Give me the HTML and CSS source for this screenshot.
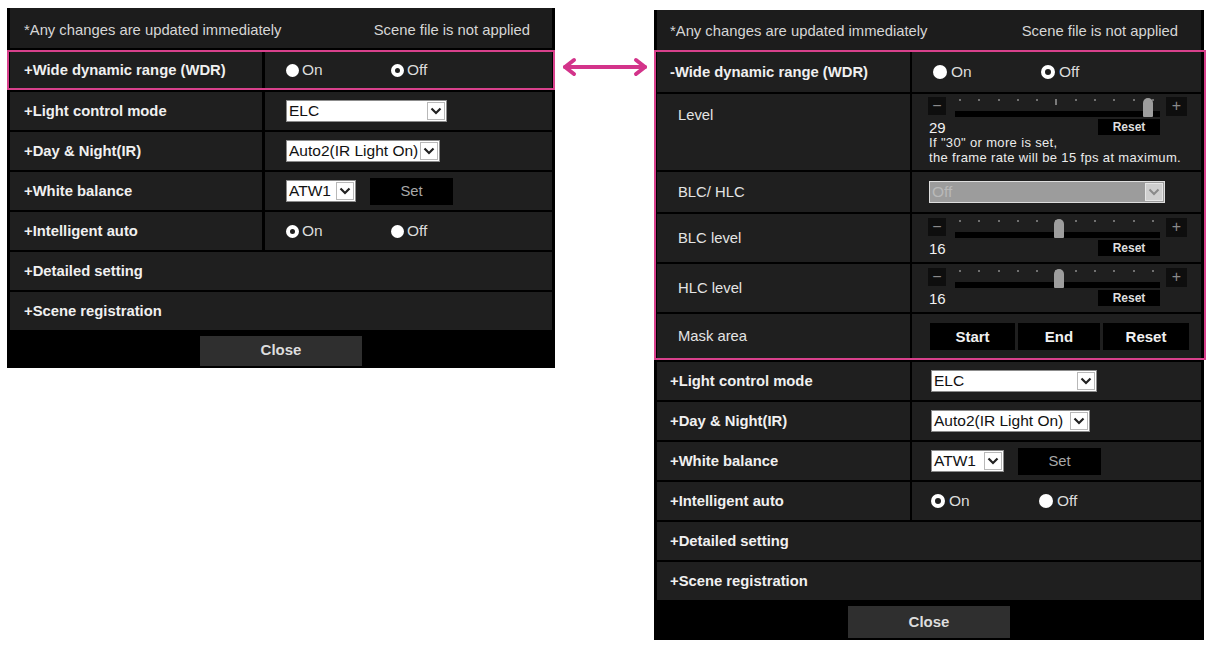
FILE: index.html
```html
<!DOCTYPE html>
<html>
<head>
<meta charset="utf-8">
<title>Image adjust</title>
<link rel="stylesheet" href="styles.css">
</head>
<body>
<div class="stage">

  <section class="panel panel-left">
    <div class="head"><span>*Any changes are updated immediately</span><span>Scene file is not applied</span></div>
    <div class="hl">
      <div class="row h36">
        <div class="lab b">+Wide dynamic range (WDR)</div>
        <div class="val">
          <span class="radio"><i class="dot fill"></i>On</span>
          <span class="radio"><i class="dot ring"></i>Off</span>
        </div>
      </div>
    </div>
    <div class="row">
      <div class="lab b">+Light control mode</div>
      <div class="val"><div class="sel w161"><span class="txt">ELC</span><i class="arr"><svg width="12" height="8" viewBox="0 0 12 8"><polyline points="1.5,1.5 6,6 10.5,1.5" fill="none" stroke="#222" stroke-width="2.2"/></svg></i></div></div>
    </div>
    <div class="row">
      <div class="lab b">+Day &amp; Night(IR)</div>
      <div class="val"><div class="sel w154"><span class="txt">Auto2(IR Light On)</span><i class="arr"><svg width="12" height="8" viewBox="0 0 12 8"><polyline points="1.5,1.5 6,6 10.5,1.5" fill="none" stroke="#222" stroke-width="2.2"/></svg></i></div></div>
    </div>
    <div class="row">
      <div class="lab b">+White balance</div>
      <div class="val"><div class="sel w70"><span class="txt">ATW1</span><i class="arr"><svg width="12" height="8" viewBox="0 0 12 8"><polyline points="1.5,1.5 6,6 10.5,1.5" fill="none" stroke="#222" stroke-width="2.2"/></svg></i></div><span class="setbtn">Set</span></div>
    </div>
    <div class="row">
      <div class="lab b">+Intelligent auto</div>
      <div class="val">
        <span class="radio"><i class="dot ring"></i>On</span>
        <span class="radio"><i class="dot fill"></i>Off</span>
      </div>
    </div>
    <div class="row full"><div class="lab b">+Detailed setting</div></div>
    <div class="row full"><div class="lab b">+Scene registration</div></div>
    <div class="closebar"><span class="closebtn">Close</span></div>
  </section>

  <div class="arrow">
    <svg width="90" height="20" viewBox="0 0 90 20">
      <line x1="5" y1="10" x2="85" y2="10" stroke="#d3338a" stroke-width="4" stroke-linecap="round"/>
      <polyline points="14,3 5,10 14,17" fill="none" stroke="#d3338a" stroke-width="4" stroke-linecap="round" stroke-linejoin="round"/>
      <polyline points="76,3 85,10 76,17" fill="none" stroke="#d3338a" stroke-width="4" stroke-linecap="round" stroke-linejoin="round"/>
    </svg>
  </div>

  <section class="panel panel-right">
    <div class="head"><span>*Any changes are updated immediately</span><span>Scene file is not applied</span></div>
    <div class="hl hl-right">
      <div class="row">
        <div class="lab b">-Wide dynamic range (WDR)</div>
        <div class="val">
          <span class="radio"><i class="dot fill"></i>On</span>
          <span class="radio"><i class="dot ring"></i>Off</span>
        </div>
      </div>
      <div class="row h76">
        <div class="lab sub top">Level</div>
        <div class="val slider">
          <div class="sl-top">
            <span class="pm">&minus;</span>
            <div class="track-area">
              <div class="dots"><i></i><i></i><i></i><i></i><i></i><i class="tick"></i><i></i><i></i><i></i><i></i><i></i></div>
              <div class="track"></div>
              <span class="thumb" style="left:91.5%"></span>
            </div>
            <span class="pm">+</span>
          </div>
          <div class="sl-bot"><span class="num">29</span><span class="reset">Reset</span></div>
          <div class="note">If "30" or more is set,<br>the frame rate will be 15 fps at maximum.</div>
        </div>
      </div>
      <div class="row h40">
        <div class="lab sub">BLC/ HLC</div>
        <div class="val vr"><div class="sel dis w236"><span class="txt">Off</span><i class="arr"><svg width="12" height="8" viewBox="0 0 12 8"><polyline points="1.5,1.5 6,6 10.5,1.5" fill="none" stroke="#8a8a8a" stroke-width="2"/></svg></i></div></div>
      </div>
      <div class="row h48">
        <div class="lab sub">BLC level</div>
        <div class="val slider s2">
          <div class="sl-top">
            <span class="pm">&minus;</span>
            <div class="track-area">
              <div class="dots"><i></i><i></i><i></i><i></i><i></i><i class="tick"></i><i></i><i></i><i></i><i></i><i></i></div>
              <div class="track"></div>
              <span class="thumb" style="left:48.5%"></span>
            </div>
            <span class="pm">+</span>
          </div>
          <div class="sl-bot"><span class="num">16</span><span class="reset">Reset</span></div>
        </div>
      </div>
      <div class="row h48">
        <div class="lab sub">HLC level</div>
        <div class="val slider s2">
          <div class="sl-top">
            <span class="pm">&minus;</span>
            <div class="track-area">
              <div class="dots"><i></i><i></i><i></i><i></i><i></i><i class="tick"></i><i></i><i></i><i></i><i></i><i></i></div>
              <div class="track"></div>
              <span class="thumb" style="left:48.5%"></span>
            </div>
            <span class="pm">+</span>
          </div>
          <div class="sl-bot"><span class="num">16</span><span class="reset">Reset</span></div>
        </div>
      </div>
      <div class="row h44">
        <div class="lab sub">Mask area</div>
        <div class="val mask"><span class="mbtn w85">Start</span><span class="mbtn w82">End</span><span class="mbtn w86">Reset</span></div>
      </div>
    </div>
    <div class="row">
      <div class="lab b">+Light control mode</div>
      <div class="val vr"><div class="sel w166"><span class="txt">ELC</span><i class="arr"><svg width="12" height="8" viewBox="0 0 12 8"><polyline points="1.5,1.5 6,6 10.5,1.5" fill="none" stroke="#222" stroke-width="2.2"/></svg></i></div></div>
    </div>
    <div class="row">
      <div class="lab b">+Day &amp; Night(IR)</div>
      <div class="val vr"><div class="sel w159"><span class="txt">Auto2(IR Light On)</span><i class="arr"><svg width="12" height="8" viewBox="0 0 12 8"><polyline points="1.5,1.5 6,6 10.5,1.5" fill="none" stroke="#222" stroke-width="2.2"/></svg></i></div></div>
    </div>
    <div class="row">
      <div class="lab b">+White balance</div>
      <div class="val vr"><div class="sel w73"><span class="txt">ATW1</span><i class="arr"><svg width="12" height="8" viewBox="0 0 12 8"><polyline points="1.5,1.5 6,6 10.5,1.5" fill="none" stroke="#222" stroke-width="2.2"/></svg></i></div><span class="setbtn">Set</span></div>
    </div>
    <div class="row">
      <div class="lab b">+Intelligent auto</div>
      <div class="val vr">
        <span class="radio"><i class="dot ring"></i>On</span>
        <span class="radio"><i class="dot fill"></i>Off</span>
      </div>
    </div>
    <div class="row full"><div class="lab b">+Detailed setting</div></div>
    <div class="row full"><div class="lab b">+Scene registration</div></div>
    <div class="closebar cb-right"><span class="closebtn">Close</span></div>
  </section>

</div>
</body>
</html>
```

FILE: styles.css
```css
* { box-sizing: border-box; }

body {
  margin: 0;
  background: #fff;
  font-family: "Liberation Sans", Arial, sans-serif;
}

.stage {
  display: flex;
  align-items: flex-start;
  padding: 8px 0 0 7px;
}

.panel {
  background: #000;
  padding: 0 3px;
  color: #ececec;
  font-size: 14.8px;
}

.panel-left { width: 548px; }
.panel-right { width: 550px; margin-top: 2px; }

.arrow {
  width: 99px;
  padding-top: 49px;
  display: flex;
  justify-content: center;
}

.head {
  height: 40px;
  display: flex;
  justify-content: space-between;
  align-items: center;
  background: #1c1c1c;
  color: #d6d6d6;
  padding: 3px 22px 0 14px;
}
.panel-right .head { padding: 1px 23px 0 13px; }

.hl {
  margin: 2px -3px 0;
  border: 2px solid #d8418c;
  padding: 0 1px;
}
.hl-right { margin-top: 0; margin-right: -5px; padding-right: 3px; }

.row {
  display: grid;
  grid-template-columns: 252px 1fr;
  column-gap: 3px;
  margin-top: 2px;
  height: 38px;
}
.panel-right .row { grid-template-columns: 253px 1fr; column-gap: 2px; }
.hl .row:first-child { margin-top: 0; }
.panel-right .hl .row:first-child { height: 40px; }

.row.h36 { height: 36px; }
.row.h40 { height: 40px; }
.row.h44 { height: 44px; }
.row.h48 { height: 48px; }
.row.h76 { height: 76px; }
.row.full, .panel-right .row.full { grid-template-columns: 1fr; }

.lab, .val {
  background: #1f1f1f;
  display: flex;
  align-items: center;
}
.lab { padding-left: 14px; }
.panel-right .lab { padding-left: 13px; }
.lab.b { font-weight: bold; color: #f0f0f0; }
.panel-right .lab.sub { padding-left: 21px; color: #e4e4e4; }
.lab.top { align-items: flex-start; padding-top: 13px; }

.val { padding-left: 21px; }
.val.vr { padding-left: 19px; }

/* radios */
.radio {
  display: inline-flex;
  align-items: center;
  gap: 3px;
  color: #dcdcdc;
  width: 105px;
  font-size: 15.5px;
}
.panel-right .radio { width: 108px; gap: 4px; }
.dot {
  display: inline-block;
  width: 13px;
  height: 13px;
  border-radius: 50%;
  background: #fff;
}
.panel-right .dot { width: 14px; height: 14px; }
.dot.ring {
  background: #1f1f1f;
  border: 4px solid #fff;
}

/* selects */
.sel {
  display: flex;
  align-items: center;
  height: 22px;
  background: #fff;
  border: 1px solid #8c8c8c;
  color: #111;
  padding: 1px;
  font-size: 15.5px;
}
.sel .txt { padding-left: 1px; white-space: nowrap; }
.sel .arr {
  margin-left: auto;
  flex: none;
  width: 18px;
  height: 18px;
  border: 1px solid #b8b8b8;
  background: #fff;
  display: flex;
  align-items: center;
  justify-content: center;
}
.w70 { width: 70px; }
.w73 { width: 73px; }
.w154 { width: 154px; }
.w159 { width: 159px; }
.w161 { width: 161px; }
.w166 { width: 166px; }
.w236 { width: 236px; }

.sel.dis {
  background: #9c9c9c;
  border: 1px solid #dedede;
  color: #b9b9b9;
}
.sel.dis .arr { background: #cfcfcf; border-color: #e6e6e6; }
.panel-right .val.vr .sel.dis { margin-left: -2px; }

.setbtn {
  width: 83px;
  height: 27px;
  margin-left: 14px;
  background: #000;
  color: #a8a8a8;
  display: flex;
  align-items: center;
  justify-content: center;
}

/* sliders */
.val.slider {
  flex-direction: column;
  align-items: stretch;
  justify-content: flex-start;
  padding: 3px 14px 0 16px;
}
.val.slider.s2 { padding-top: 4px; }

.sl-top {
  display: flex;
  height: 19px;
}
.pm {
  width: 18px;
  height: 18px;
  background: #0e0e0e;
  color: #8a8a8a;
  font-size: 16px;
  line-height: 18px;
  text-align: center;
}
.sl-top .pm:last-child { width: 21px; height: 19px; }

.track-area {
  flex: 1;
  position: relative;
  margin: 0 6px 0 9px;
  padding-top: 2px;
}
.dots {
  display: flex;
  justify-content: space-between;
  align-items: flex-start;
  height: 6px;
  padding: 0 6px 0 4px;
}
.dots i {
  width: 2px;
  height: 2px;
  background: #707070;
}
.dots i.tick { height: 6px; background: #7a7a7a; }
.track {
  margin-top: 6px;
  height: 6px;
  background: #000;
}
.thumb {
  position: absolute;
  top: 1px;
  width: 10px;
  height: 19px;
  background: #9d9d9d;
  border-radius: 5px 5px 1px 1px;
}

.sl-bot {
  display: flex;
  justify-content: space-between;
  align-items: center;
  margin-top: 3px;
  height: 16px;
  padding-right: 27px;
}
.num { color: #f2f2f2; font-size: 15px; padding-left: 1px; }
.reset {
  width: 62px;
  height: 16px;
  background: #000;
  color: #dedede;
  font-size: 12px;
  font-weight: bold;
  display: flex;
  align-items: center;
  justify-content: center;
}
.note {
  font-size: 13px;
  line-height: 15px;
  letter-spacing: 0.35px;
  color: #ececec;
  padding-left: 1px;
}

/* mask buttons */
.val.mask { padding-left: 18px; gap: 3px; }
.mbtn {
  height: 27px;
  background: #000;
  color: #f0f0f0;
  font-weight: bold;
  font-size: 15px;
  display: flex;
  align-items: center;
  justify-content: center;
}
.w82 { width: 82px; }
.w85 { width: 85px; }
.w86 { width: 86px; }

/* close */
.closebar {
  height: 38px;
  display: flex;
  justify-content: center;
  padding-top: 6px;
}
.closebar.cb-right { height: 40px; }
.closebtn {
  width: 162px;
  height: 30px;
  background: #2f2f2f;
  color: #dddddd;
  font-weight: bold;
  font-size: 15px;
  display: flex;
  align-items: center;
  justify-content: center;
  padding-bottom: 3px;
}
.cb-right .closebtn { height: 32px; padding-bottom: 2px; }
```
